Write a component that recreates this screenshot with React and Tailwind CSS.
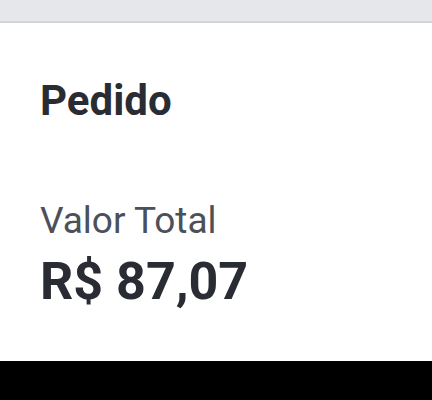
export default function App() {
  return (
    <div className="w-[432px] h-[400px] flex flex-col bg-white" style={{ fontFamily: 'Roboto, "Noto Sans", sans-serif' }}>
      <div className="h-[23px] bg-[#e5e7eb] border-b-2 border-[#d1d5db] shrink-0" />
      <div className="flex-1 flex flex-col px-10 pt-[57px]">
        <h1 className="text-[42px] leading-none font-bold text-[#2a2c33]">Pedido</h1>
        <p className="mt-[80px] text-[37px] leading-none text-[#4b5059]">Valor Total</p>
        <p className="mt-[17px] text-[52px] leading-none font-bold text-[#2a2c33]">R$ 87,07</p>
      </div>
      <div className="h-[39px] bg-black shrink-0" />
    </div>
  );
}
